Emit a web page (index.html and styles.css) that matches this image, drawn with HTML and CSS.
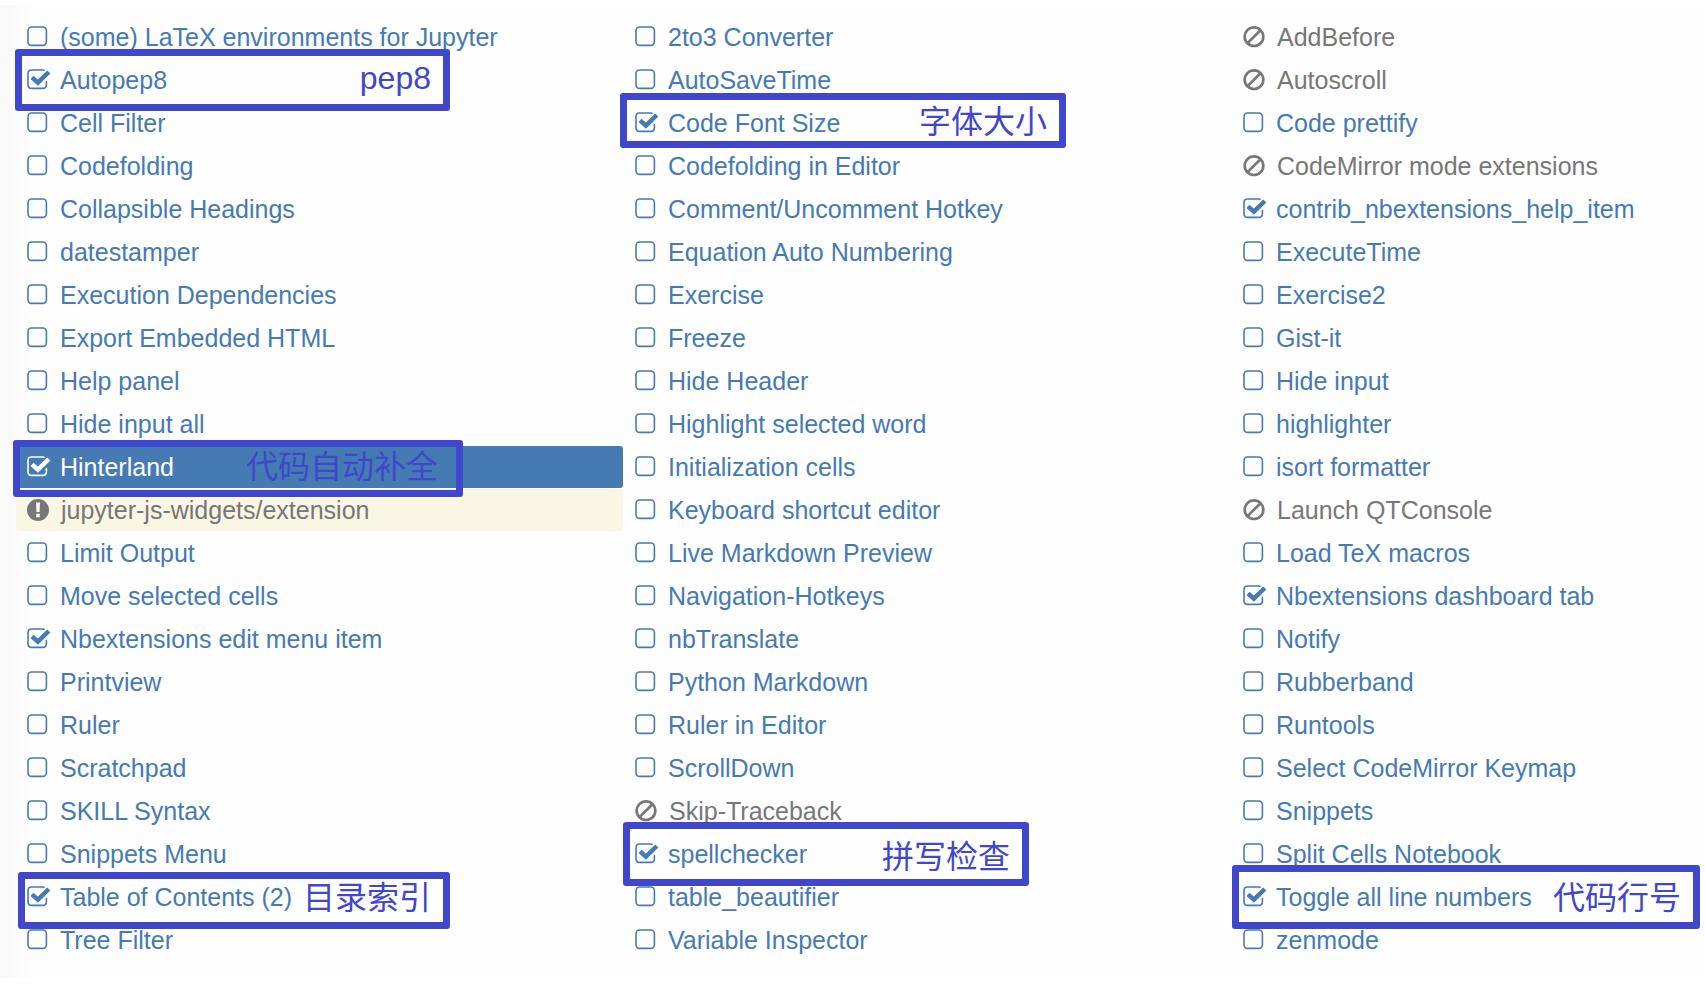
FILE: index.html
```html
<!DOCTYPE html>
<html lang="en">
<head>
<meta charset="utf-8">
<title>Nbextensions</title>
<link rel="stylesheet" href="styles.css">
</head>
<body>
<svg class="sprite" aria-hidden="true">
  <symbol id="off" viewBox="0 0 24 22"><rect x="1" y="1" width="18.4" height="18.4" rx="3.6" fill="none" stroke="currentColor" stroke-width="1.6"/></symbol>
  <symbol id="on" viewBox="0 0 24 22"><path d="M17 1.3Q16.400 1 15.800 1H4.600Q1 1 1 4.600V15.800Q1 19.400 4.600 19.400H15.800Q19.400 19.400 19.400 15.800V12.500" fill="none" stroke="currentColor" stroke-width="1.6" stroke-linecap="round"/><path d="M5 8.300L10.900 13.700L21.800 3" fill="none" stroke="currentColor" stroke-width="4.500"/></symbol>
  <symbol id="ban" viewBox="0 0 24 22"><circle cx="11" cy="10.700" r="9.300" fill="none" stroke="currentColor" stroke-width="2.700"/><path d="M4.800 16.900L17.200 4.500" stroke="currentColor" stroke-width="2.700"/></symbol>
  <symbol id="warn" viewBox="0 0 24 22"><path fill="currentColor" fill-rule="evenodd" d="M11 0a11 11 0 1 0 0 22a11 11 0 1 0 0-22zM9 3.500h4l-.4 9.500h-3.200zM9.200 14.800h3.600v3.400h-3.600z"/></symbol>
</svg>
<main class="panel">
  <ul class="column">
    <li class="ext"><label><input type="checkbox"><svg><use href="#off"/></svg>(some) LaTeX environments for Jupyter</label></li>
    <li class="ext"><label><input type="checkbox" checked><svg><use href="#on"/></svg>Autopep8</label><span class="note note-pep8">pep8</span></li>
    <li class="ext"><label><input type="checkbox"><svg><use href="#off"/></svg>Cell Filter</label></li>
    <li class="ext"><label><input type="checkbox"><svg><use href="#off"/></svg>Codefolding</label></li>
    <li class="ext"><label><input type="checkbox"><svg><use href="#off"/></svg>Collapsible Headings</label></li>
    <li class="ext"><label><input type="checkbox"><svg><use href="#off"/></svg>datestamper</label></li>
    <li class="ext"><label><input type="checkbox"><svg><use href="#off"/></svg>Execution Dependencies</label></li>
    <li class="ext"><label><input type="checkbox"><svg><use href="#off"/></svg>Export Embedded HTML</label></li>
    <li class="ext"><label><input type="checkbox"><svg><use href="#off"/></svg>Help panel</label></li>
    <li class="ext"><label><input type="checkbox"><svg><use href="#off"/></svg>Hide input all</label></li>
    <li class="ext selected"><label><input type="checkbox" checked><svg><use href="#on"/></svg>Hinterland</label><span class="note note-complete" lang="zh">代码自动补全</span></li>
    <li class="ext warning"><a href="#widgets"><svg><use href="#warn"/></svg>jupyter-js-widgets/extension</a></li>
    <li class="ext"><label><input type="checkbox"><svg><use href="#off"/></svg>Limit Output</label></li>
    <li class="ext"><label><input type="checkbox"><svg><use href="#off"/></svg>Move selected cells</label></li>
    <li class="ext"><label><input type="checkbox" checked><svg><use href="#on"/></svg>Nbextensions edit menu item</label></li>
    <li class="ext"><label><input type="checkbox"><svg><use href="#off"/></svg>Printview</label></li>
    <li class="ext"><label><input type="checkbox"><svg><use href="#off"/></svg>Ruler</label></li>
    <li class="ext"><label><input type="checkbox"><svg><use href="#off"/></svg>Scratchpad</label></li>
    <li class="ext"><label><input type="checkbox"><svg><use href="#off"/></svg>SKILL Syntax</label></li>
    <li class="ext"><label><input type="checkbox"><svg><use href="#off"/></svg>Snippets Menu</label></li>
    <li class="ext"><label><input type="checkbox" checked><svg><use href="#on"/></svg>Table of Contents (2)</label><span class="note note-toc" lang="zh">目录索引</span></li>
    <li class="ext"><label><input type="checkbox"><svg><use href="#off"/></svg>Tree Filter</label></li>
  </ul>
  <ul class="column">
    <li class="ext"><label><input type="checkbox"><svg><use href="#off"/></svg>2to3 Converter</label></li>
    <li class="ext"><label><input type="checkbox"><svg><use href="#off"/></svg>AutoSaveTime</label></li>
    <li class="ext"><label><input type="checkbox" checked><svg><use href="#on"/></svg>Code Font Size</label><span class="note note-font" lang="zh">字体大小</span></li>
    <li class="ext"><label><input type="checkbox"><svg><use href="#off"/></svg>Codefolding in Editor</label></li>
    <li class="ext"><label><input type="checkbox"><svg><use href="#off"/></svg>Comment/Uncomment Hotkey</label></li>
    <li class="ext"><label><input type="checkbox"><svg><use href="#off"/></svg>Equation Auto Numbering</label></li>
    <li class="ext"><label><input type="checkbox"><svg><use href="#off"/></svg>Exercise</label></li>
    <li class="ext"><label><input type="checkbox"><svg><use href="#off"/></svg>Freeze</label></li>
    <li class="ext"><label><input type="checkbox"><svg><use href="#off"/></svg>Hide Header</label></li>
    <li class="ext"><label><input type="checkbox"><svg><use href="#off"/></svg>Highlight selected word</label></li>
    <li class="ext"><label><input type="checkbox"><svg><use href="#off"/></svg>Initialization cells</label></li>
    <li class="ext"><label><input type="checkbox"><svg><use href="#off"/></svg>Keyboard shortcut editor</label></li>
    <li class="ext"><label><input type="checkbox"><svg><use href="#off"/></svg>Live Markdown Preview</label></li>
    <li class="ext"><label><input type="checkbox"><svg><use href="#off"/></svg>Navigation-Hotkeys</label></li>
    <li class="ext"><label><input type="checkbox"><svg><use href="#off"/></svg>nbTranslate</label></li>
    <li class="ext"><label><input type="checkbox"><svg><use href="#off"/></svg>Python Markdown</label></li>
    <li class="ext"><label><input type="checkbox"><svg><use href="#off"/></svg>Ruler in Editor</label></li>
    <li class="ext"><label><input type="checkbox"><svg><use href="#off"/></svg>ScrollDown</label></li>
    <li class="ext"><a href="#skip-traceback"><svg><use href="#ban"/></svg>Skip-Traceback</a></li>
    <li class="ext"><label><input type="checkbox" checked><svg><use href="#on"/></svg>spellchecker</label><span class="note note-spell" lang="zh">拼写检查</span></li>
    <li class="ext"><label><input type="checkbox"><svg><use href="#off"/></svg>table_beautifier</label></li>
    <li class="ext"><label><input type="checkbox"><svg><use href="#off"/></svg>Variable Inspector</label></li>
  </ul>
  <ul class="column">
    <li class="ext"><a href="#addbefore"><svg><use href="#ban"/></svg>AddBefore</a></li>
    <li class="ext"><a href="#autoscroll"><svg><use href="#ban"/></svg>Autoscroll</a></li>
    <li class="ext"><label><input type="checkbox"><svg><use href="#off"/></svg>Code prettify</label></li>
    <li class="ext"><a href="#codemirror"><svg><use href="#ban"/></svg>CodeMirror mode extensions</a></li>
    <li class="ext"><label><input type="checkbox" checked><svg><use href="#on"/></svg>contrib_nbextensions_help_item</label></li>
    <li class="ext"><label><input type="checkbox"><svg><use href="#off"/></svg>ExecuteTime</label></li>
    <li class="ext"><label><input type="checkbox"><svg><use href="#off"/></svg>Exercise2</label></li>
    <li class="ext"><label><input type="checkbox"><svg><use href="#off"/></svg>Gist-it</label></li>
    <li class="ext"><label><input type="checkbox"><svg><use href="#off"/></svg>Hide input</label></li>
    <li class="ext"><label><input type="checkbox"><svg><use href="#off"/></svg>highlighter</label></li>
    <li class="ext"><label><input type="checkbox"><svg><use href="#off"/></svg>isort formatter</label></li>
    <li class="ext"><a href="#qtconsole"><svg><use href="#ban"/></svg>Launch QTConsole</a></li>
    <li class="ext"><label><input type="checkbox"><svg><use href="#off"/></svg>Load TeX macros</label></li>
    <li class="ext"><label><input type="checkbox" checked><svg><use href="#on"/></svg>Nbextensions dashboard tab</label></li>
    <li class="ext"><label><input type="checkbox"><svg><use href="#off"/></svg>Notify</label></li>
    <li class="ext"><label><input type="checkbox"><svg><use href="#off"/></svg>Rubberband</label></li>
    <li class="ext"><label><input type="checkbox"><svg><use href="#off"/></svg>Runtools</label></li>
    <li class="ext"><label><input type="checkbox"><svg><use href="#off"/></svg>Select CodeMirror Keymap</label></li>
    <li class="ext"><label><input type="checkbox"><svg><use href="#off"/></svg>Snippets</label></li>
    <li class="ext"><label><input type="checkbox"><svg><use href="#off"/></svg>Split Cells Notebook</label></li>
    <li class="ext"><label><input type="checkbox" checked><svg><use href="#on"/></svg>Toggle all line numbers</label><span class="note note-lines" lang="zh">代码行号</span></li>
    <li class="ext"><label><input type="checkbox"><svg><use href="#off"/></svg>zenmode</label></li>
  </ul>
</main>
</body>
</html>
```
FILE: styles.css
```css
* {
  box-sizing: border-box;
}

body {
  margin: 0;
  background: #fff;
  font-family: "Liberation Sans", "Noto Sans CJK SC", Arial, sans-serif;
  font-size: 25px;
  line-height: 42px;
}

.sprite {
  position: absolute;
  width: 0;
  height: 0;
}

.panel {
  display: grid;
  grid-template-columns: 607fr 607fr 473fr;
  column-gap: 1px;
  margin-top: 5px;
  padding: 11px 0 17px 16px;
  background: linear-gradient(to right, #f8f8f8, #fefefe 34px);
}

.column {
  display: flex;
  flex-direction: column;
  gap: 1px;
  min-width: 0;
  margin: 0;
  padding: 0;
  list-style: none;
}

.ext {
  position: relative;
  border-radius: 3px;
  color: #457ab3;
  white-space: nowrap;
}

.ext label,
.ext a {
  position: relative;
  display: flex;
  align-items: center;
  gap: 9px;
  padding-left: 11px;
}

.ext a {
  gap: 10px;
  color: #777;
  text-decoration: none;
}

.ext svg {
  flex: none;
  width: 24px;
  height: 22px;
}

.ext input {
  position: absolute;
  appearance: none;
  width: 22px;
  height: 22px;
  margin: 0;
}

.selected {
  background: #467ab3;
  color: #fff;
}

.warning {
  background: #faf6e4;
}

/* Annotation frames drawn over the list */
.note {
  position: absolute;
  z-index: 1;
  display: flex;
  align-items: center;
  justify-content: flex-end;
  padding-right: 12px;
  border: 7px solid #4047cc;
  border-radius: 3px;
  color: #4047cc;
  font-size: 32px;
  pointer-events: none;
}

.note:lang(zh) {
  font-family: "Noto Sans CJK SC", sans-serif;
}

.note-pep8 {
  top: -10px;
  left: -1px;
  width: 435px;
  height: 62px;
  padding-bottom: 4px;
}

.note-complete {
  top: -6px;
  left: -3px;
  width: 450px;
  height: 57px;
  padding-right: 18px;
  padding-bottom: 10px;
}

.note-toc {
  top: -4px;
  left: 2px;
  width: 432px;
  height: 57px;
  padding-bottom: 12px;
}

.note-font {
  top: -9px;
  left: -4px;
  width: 446px;
  height: 55px;
  padding-bottom: 4px;
}

.note-spell {
  top: -11px;
  left: -1px;
  width: 406px;
  height: 64px;
}

.note-lines {
  top: -11px;
  left: 0;
  width: 468px;
  height: 64px;
  padding-bottom: 4px;
}
```
